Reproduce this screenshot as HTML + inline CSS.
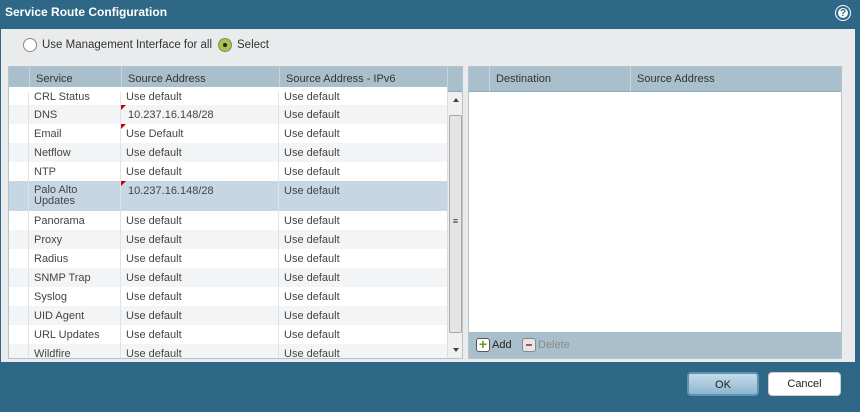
<!DOCTYPE html>
<html><head><style>
*{box-sizing:border-box;margin:0;padding:0}
body{width:860px;height:412px;background:#2f6886;font-family:"Liberation Sans",sans-serif;font-size:11px;color:#333;position:relative;overflow:hidden}
.abs{position:absolute}
.title{left:5px;top:5px;color:#fff;font-weight:bold;font-size:12px}
.panel{left:1px;top:29px;width:854px;height:333px;background:#e9ebed}
.radio{width:14px;height:14px;border-radius:50%;border:1px solid #8a8a8a;background:#fff}
.tbl{background:#fff;border:1px solid #b5c3cc}
.hdr{height:25px;background:#a9bfcc;border-bottom:1px solid #8fa9b8}
.hc{position:absolute;top:0;height:25px;line-height:25px;padding-left:6px;border-left:1px solid #c8d5dd;color:#333}
.row{position:absolute;left:0;width:438px;height:19px}
.row span{position:absolute;top:4px;color:#444}
.vl{position:absolute;top:25px;bottom:0;width:1px;background:#dde3e7}
.tri{position:absolute;width:0;height:0;border-top:5px solid #c00;border-right:5px solid transparent}
.btn{height:24px;border-radius:4px;text-align:center;line-height:22px;font-size:11px;color:#222}
</style></head><body>
<div class="abs title">Service Route Configuration</div>
<div class="abs" style="left:836px;top:6px;width:14px;height:14px;border-radius:50%;background:#fff;border:2px solid #2f6886;box-shadow:0 0 0 1px #fff;color:#2f6886;font-weight:bold;font-size:10px;line-height:11px;text-align:center">?</div>
<div class="abs panel"></div>
<div class="abs radio" style="left:23px;top:38px"></div>
<div class="abs" style="left:42px;top:39px;font-size:11.5px">Use Management Interface for all</div>
<div class="abs radio" style="left:218px;top:38px;background:#a7c34a;border-color:#7d8c60"><div style="width:4px;height:4px;border-radius:50%;background:#222;margin:4px"></div></div>
<div class="abs" style="left:237px;top:39px;font-size:11.5px">Select</div>

<div class="abs tbl" style="left:8px;top:66px;width:455px;height:293px;overflow:hidden">
<div class="hdr" style="position:relative">
<div class="hc" style="left:20px">Service</div>
<div class="hc" style="left:112px">Source Address</div>
<div class="hc" style="left:270px">Source Address - IPv6</div>
<div class="hc" style="left:438px"></div>
</div>
<div style="position:absolute;left:0;top:20px;width:438px;height:272px">
<div class="row" style="top:0;background:#fff"><span style="left:25px">CRL Status</span><span style="left:117px">Use default</span><span style="left:275px">Use default</span></div>
<div class="row" style="top:18px;background:#f3f4f5"><span style="left:25px">DNS</span><span style="left:119px">10.237.16.148/28</span><span style="left:275px">Use default</span><i class="tri" style="left:112px;top:0"></i></div>
<div class="row" style="top:37px;background:#fff"><span style="left:25px">Email</span><span style="left:117px">Use Default</span><span style="left:275px">Use default</span><i class="tri" style="left:112px;top:0"></i></div>
<div class="row" style="top:56px;background:#f3f4f5"><span style="left:25px">Netflow</span><span style="left:117px">Use default</span><span style="left:275px">Use default</span></div>
<div class="row" style="top:75px;background:#fff"><span style="left:25px">NTP</span><span style="left:117px">Use default</span><span style="left:275px">Use default</span></div>
<div class="row" style="top:94px;height:30px;background:#c6d7e3"><span style="left:25px;line-height:11px">Palo Alto<br>Updates</span><span style="left:119px">10.237.16.148/28</span><span style="left:275px">Use default</span><i class="tri" style="left:112px;top:0"></i></div>
<div class="row" style="top:124px;background:#fff"><span style="left:25px">Panorama</span><span style="left:117px">Use default</span><span style="left:275px">Use default</span></div>
<div class="row" style="top:143px;background:#f3f4f5"><span style="left:25px">Proxy</span><span style="left:117px">Use default</span><span style="left:275px">Use default</span></div>
<div class="row" style="top:162px;background:#fff"><span style="left:25px">Radius</span><span style="left:117px">Use default</span><span style="left:275px">Use default</span></div>
<div class="row" style="top:181px;background:#f3f4f5"><span style="left:25px">SNMP Trap</span><span style="left:117px">Use default</span><span style="left:275px">Use default</span></div>
<div class="row" style="top:200px;background:#fff"><span style="left:25px">Syslog</span><span style="left:117px">Use default</span><span style="left:275px">Use default</span></div>
<div class="row" style="top:219px;background:#f3f4f5"><span style="left:25px">UID Agent</span><span style="left:117px">Use default</span><span style="left:275px">Use default</span></div>
<div class="row" style="top:238px;background:#fff"><span style="left:25px">URL Updates</span><span style="left:117px">Use default</span><span style="left:275px">Use default</span></div>
<div class="row" style="top:257px;background:#f3f4f5"><span style="left:25px">Wildfire</span><span style="left:117px">Use default</span><span style="left:275px">Use default</span></div>
</div>
<div class="vl" style="left:19px"></div><div class="vl" style="left:111px"></div><div class="vl" style="left:269px"></div>
<div style="position:absolute;left:438px;top:25px;width:16px;height:268px;background:#f0f0f0;border-left:1px solid #ddd">
<div style="position:absolute;left:5px;top:6px;border-bottom:4px solid #444;border-left:3px solid transparent;border-right:3px solid transparent"></div>
<div style="position:absolute;left:1px;top:23px;width:13px;height:218px;background:#e4e4e4;border:1px solid #aaa;border-radius:2px;text-align:center;line-height:210px;font-size:9px">≡</div>
<div style="position:absolute;left:5px;bottom:8px;border-top:4px solid #444;border-left:3px solid transparent;border-right:3px solid transparent"></div>
</div>
</div>

<div class="abs tbl" style="left:468px;top:66px;width:374px;height:293px">
<div class="hdr" style="position:relative">
<div class="hc" style="left:20px">Destination</div>
<div class="hc" style="left:161px">Source Address</div>
</div>
<div style="position:absolute;left:0;bottom:0;width:372px;height:26px;background:#a9bfcc">
<div style="position:absolute;left:7px;top:6px;width:14px;height:14px;border:1px solid #555;border-radius:3px;background:#fff;color:#6a9a1a;font-weight:bold;font-size:14px;line-height:11px;text-align:center">+</div>
<div style="position:absolute;left:23px;top:7px;color:#222">Add</div>
<div style="position:absolute;left:53px;top:6px;width:14px;height:14px;border:1px solid #888;border-radius:3px;background:#e6e6e6"><div style="width:6px;height:2px;background:#a55;margin:5px 3px"></div></div>
<div style="position:absolute;left:69px;top:7px;color:#888">Delete</div>
</div>
</div>

<div class="abs btn" style="left:687px;top:372px;width:72px;background:linear-gradient(#c4dbe9,#8fb6cf);border:2px solid #5b94b8">OK</div>
<div class="abs btn" style="left:768px;top:372px;width:73px;background:#fff;border:1px solid #ccc">Cancel</div>
</body></html>
